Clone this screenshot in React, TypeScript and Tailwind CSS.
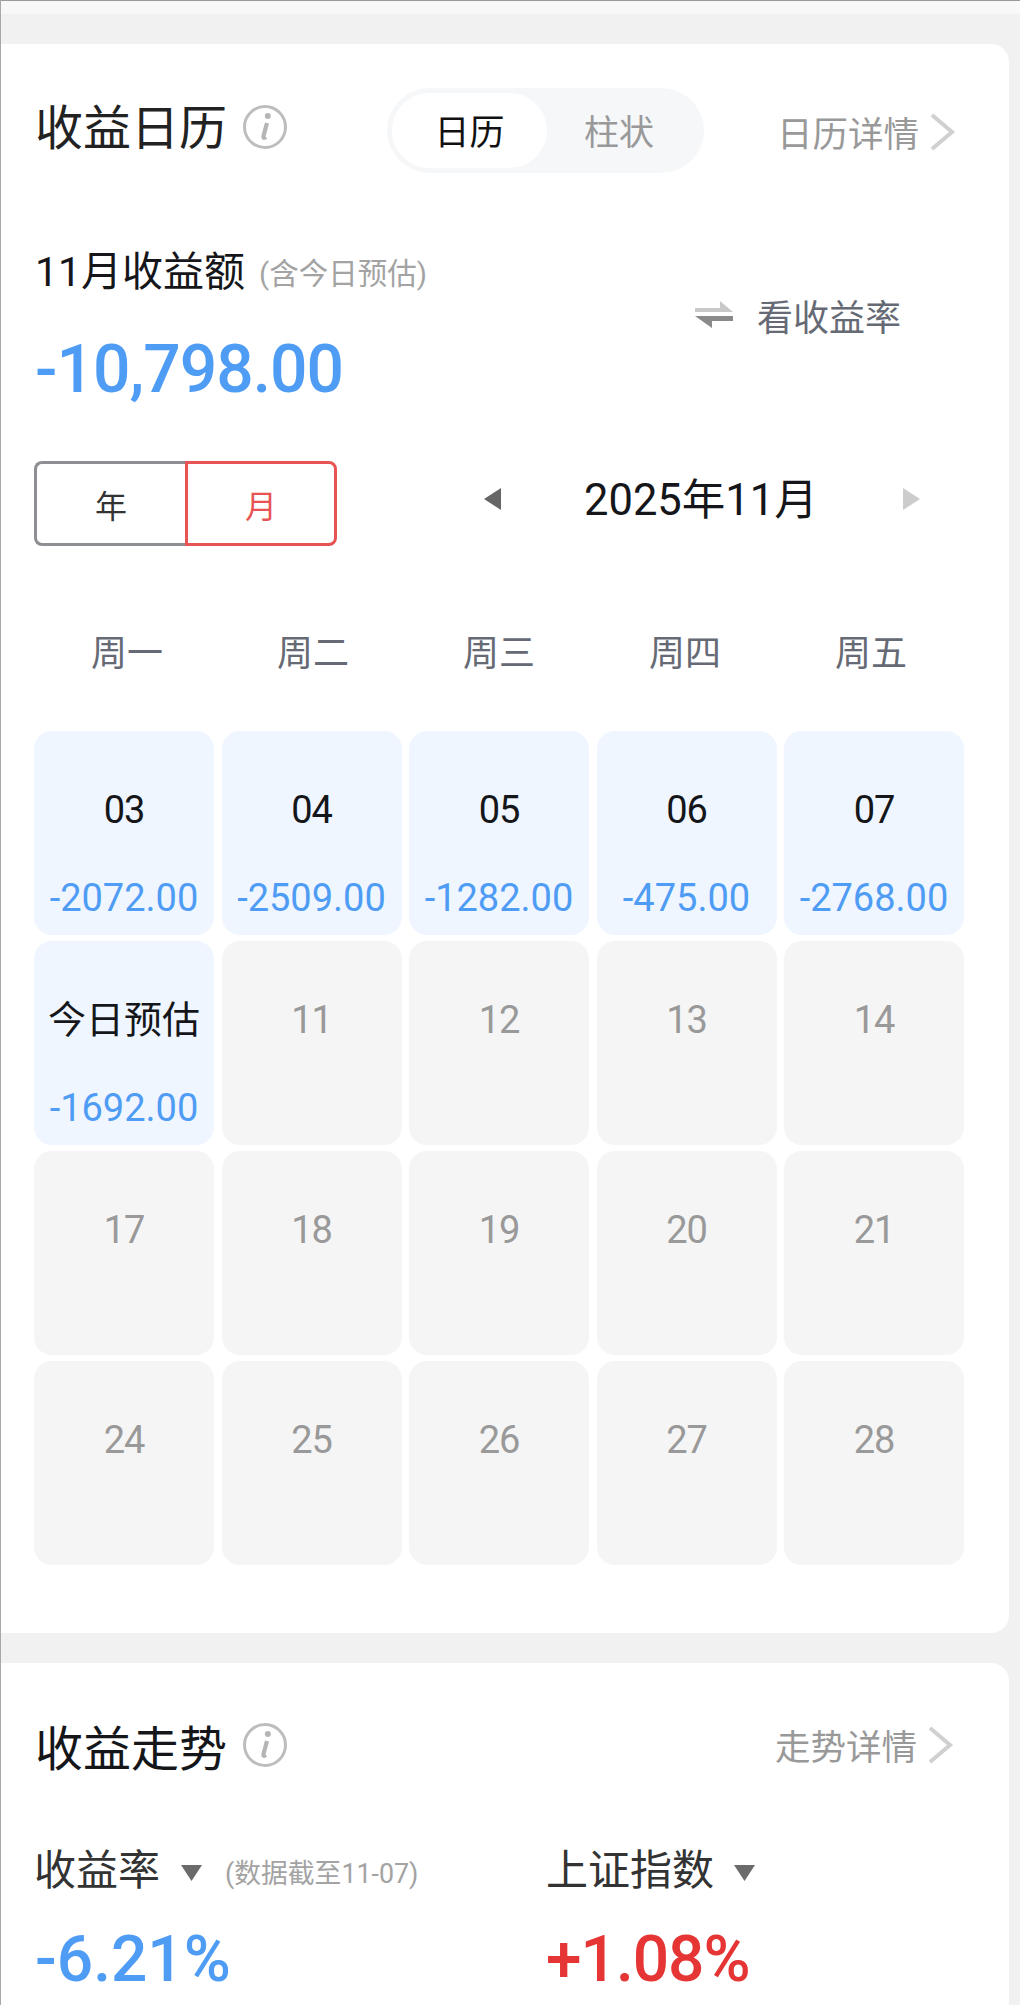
import React from 'react';

const FONT = '"Noto Sans CJK SC", sans-serif';
const NUM = 'Roboto, "Noto Sans CJK SC", sans-serif';

type Cell = { label: string; value?: string };

const rows: Cell[][] = [
  [
    { label: '03', value: '-2072.00' },
    { label: '04', value: '-2509.00' },
    { label: '05', value: '-1282.00' },
    { label: '06', value: '-475.00' },
    { label: '07', value: '-2768.00' },
  ],
  [
    { label: '今日预估', value: '-1692.00' },
    { label: '11' },
    { label: '12' },
    { label: '13' },
    { label: '14' },
  ],
  [{ label: '17' }, { label: '18' }, { label: '19' }, { label: '20' }, { label: '21' }],
  [{ label: '24' }, { label: '25' }, { label: '26' }, { label: '27' }, { label: '28' }],
];

const InfoIcon = () => (
  <svg width="46" height="46" viewBox="0 0 46 46" fill="none">
    <circle cx="23" cy="23" r="20.5" stroke="#bdbdbd" strokeWidth="3" />
    <circle cx="25.8" cy="12" r="3" fill="#b5b5b5" />
    <path d="M25 19 L21.5 32 Q21 35 24 33" stroke="#b5b5b5" strokeWidth="4.2" />
  </svg>
);

const Chevron = () => (
  <svg width="28" height="38" viewBox="0 0 28 38" fill="none">
    <path d="M3 2 L23 19 L3 36" stroke="#d0d0d0" strokeWidth="4" />
  </svg>
);

const Triangle = () => (
  <svg width="21" height="16" viewBox="0 0 21 16">
    <path d="M0 0 H21 L10.5 16 Z" fill="#6b6b6b" />
  </svg>
);

const DayCell = ({ label, value }: Cell) => {
  const today = label === '今日预估';
  const active = !!value;
  return (
    <div className={`flex h-[204px] flex-col items-center rounded-[18px] ${active ? 'bg-[#eff6ff]' : 'bg-[#f5f5f5]'}`}>
      <span className={`mt-[54px] h-[50px] leading-[50px] ${today ? 'text-[38px]' : 'text-[38px] font-[450] tracking-[-1px]'} ${active ? 'text-[#15161a]' : 'text-[#999999]'}`}>
        {label}
      </span>
      {value && <span className="mt-[38px] text-[38px] leading-[50px] font-[450] text-[#4f9cf5]">{value}</span>}
    </div>
  );
};

export default function App() {
  return (
    <div className="h-[2005px] w-[1020px] overflow-hidden border-l border-[#a8a8a8] bg-[#f1f1f1]" style={{ fontFamily: NUM }}>
      <div className="h-[14px] border-t border-[#9a9a9a] bg-[#f8f8f8]" />
      <div className="h-[30px]" />

      {/* 收益日历 */}
      <section className="h-[1589px] w-[1008px] rounded-r-[18px] bg-white pl-[33px]">
        <div className="flex h-[129px] items-center">
          <h2 className="ml-[1px] mt-[30px] text-[48px] leading-[60px] font-normal text-[#222222]" style={{ fontFamily: FONT }}>收益日历</h2>
          <div className="ml-[15px] mt-[36px]"><InfoIcon /></div>
          <div className="ml-[99px] mt-[44px] flex h-[85px] w-[317px] rounded-full bg-[#f6f7f9] p-[5px]" style={{ fontFamily: FONT }}>
            <div className="flex h-[75px] w-[155px] items-center justify-center rounded-full bg-white text-[35px] text-[#111111]">日历</div>
            <div className="flex h-[75px] w-[150px] items-center justify-center pr-[6px] text-[35px] text-[#999999]">柱状</div>
          </div>
          <div className="ml-[73px] mt-[47px] flex items-center text-[35.5px] text-[#999999]" style={{ fontFamily: FONT }}>
            <span>日历详情</span>
            <span className="ml-[10px]"><Chevron /></span>
          </div>
        </div>

        <div className="mt-[72px] flex">
          <div className="w-[661px]">
            <div className="flex items-center">
              <span className="ml-[1px] text-[41px] leading-[54px] text-[#15161a]">11月收益额</span>
              <span className="ml-[14px] mt-[4px] text-[29.5px] text-[#a3a3a3]">(含今日预估)</span>
            </div>
            <div className="ml-[1px] mt-[32px] text-[66px] leading-[78px] font-medium tracking-[-1px] text-[#4f9cf5]">-10,798.00</div>
          </div>
          <div className="mt-[45px] flex h-[50px] items-center text-[#666a75]" style={{ fontFamily: FONT }}>
            <svg width="40" height="28" viewBox="0 0 40 28">
              <path d="M0 7 H25 V0 L38 11 H0 Z" fill="#c8c8c8" />
              <path d="M0 15 H38 V20 H17 V27 Z" fill="#8a8a8a" />
            </svg>
            <span className="ml-[22px] text-[36px]">看收益率</span>
          </div>
        </div>

        <div className="mt-[52px] flex items-center">
          <div className="flex h-[85px] w-[303px]" style={{ fontFamily: FONT }}>
            <div className="flex w-[151px] items-center justify-center rounded-l-[8px] border-[3px] border-r-0 border-[#8e8e93] text-[32px] text-[#333333]">年</div>
            <div className="flex w-[152px] items-center justify-center rounded-r-[8px] border-[3px] border-[#e85454] text-[32px] text-[#e85454]">月</div>
          </div>
          <svg className="ml-[147px] mb-[10px]" width="17" height="22" viewBox="0 0 17 22"><path d="M17 0 V22 L0 11 Z" fill="#666666" /></svg>
          <span className="ml-[83px] mb-[6px] text-[43.5px] leading-[60px] text-[#15161a]">2025年11月</span>
          <svg className="ml-[85px] mb-[10px]" width="17" height="22" viewBox="0 0 17 22"><path d="M0 0 V22 L17 11 Z" fill="#cccccc" /></svg>
        </div>

        <div className="mt-[79px] grid grid-cols-[repeat(5,186px)] text-center text-[36px] leading-[50px] text-[#666a75]" style={{ fontFamily: FONT }}>
          {['周一', '周二', '周三', '周四', '周五'].map((d) => (
            <div key={d}>{d}</div>
          ))}
        </div>

        <div className="mt-[56px] grid w-[930px] grid-cols-5 gap-x-[7.5px] gap-y-[6px]">
          {rows.flat().map((c) => (
            <DayCell key={c.label} {...c} />
          ))}
        </div>
      </section>

      <div className="h-[30px]" />

      {/* 收益走势 */}
      <section className="h-[400px] w-[1008px] rounded-tr-[18px] bg-white pl-[33px]">
        <div className="flex items-center pt-[52px]">
          <h2 className="ml-[1px] text-[48px] leading-[60px] font-normal text-[#15161a]" style={{ fontFamily: FONT }}>收益走势</h2>
          <div className="ml-[15px]"><InfoIcon /></div>
          <div className="ml-auto mr-[54px] flex items-center text-[35.5px] text-[#999999]" style={{ fontFamily: FONT }}>
            <span>走势详情</span>
            <span className="ml-[10px]"><Chevron /></span>
          </div>
        </div>
        <div className="mt-[64px] flex">
          <div className="w-[512px]">
            <div className="flex items-center">
              <span className="text-[42px] leading-[56px] text-[#333333]" style={{ fontFamily: FONT }}>收益率</span>
              <span className="ml-[21px] mt-[12px]"><Triangle /></span>
              <span className="ml-[23px] mt-[14px] text-[26.8px] text-[#a3a3a3]">(数据截至11-07)</span>
            </div>
            <div className="ml-[1px] mt-[27px] text-[64px] leading-[76px] font-medium text-[#4f9cf5]">-6.21%</div>
          </div>
          <div>
            <div className="flex items-center">
              <span className="text-[42px] leading-[56px] text-[#333333]" style={{ fontFamily: FONT }}>上证指数</span>
              <span className="ml-[20px] mt-[12px]"><Triangle /></span>
            </div>
            <div className="mt-[27px] text-[64px] leading-[76px] font-medium tracking-[-1px] text-[#e53535]">+1.08%</div>
          </div>
        </div>
      </section>
    </div>
  );
}
